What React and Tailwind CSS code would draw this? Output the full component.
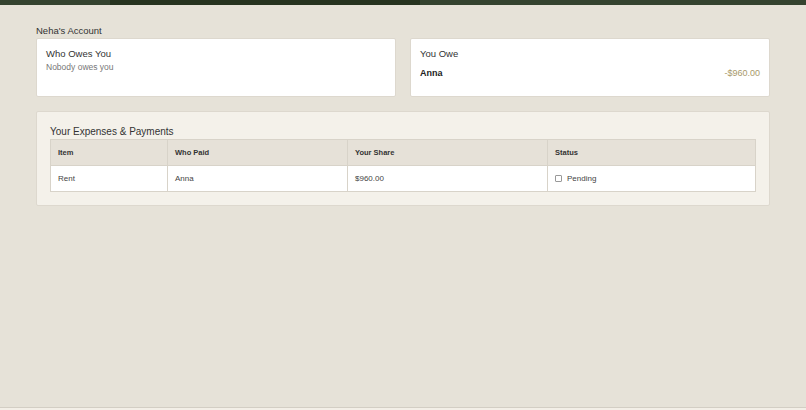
import React from "react";

export default function App() {
  return (
    <div className="w-[806px] h-[410px] flex flex-col bg-[#e6e2d8] text-[#333] overflow-hidden" style={{ fontFamily: '"Liberation Sans", Arial, sans-serif' }}>
      <div className="h-[5px] flex shrink-0 bg-[#35432f]">
        <div className="w-[110px]" />
        <div className="w-[310px] bg-[#27331f]" />
        <div className="flex-1" />
      </div>
      <div className="flex-1 flex flex-col px-[36px] pt-[19px] border-b border-[#d3cec4]">
        <div className="text-[9.5px] leading-[13px] mb-[1px]">Neha's Account</div>
        <div className="flex gap-[14px]">
          <div className="flex-1 h-[59px] bg-white rounded-[2px] border border-[#ddd8ce] px-[9px] pt-[8px]">
            <div className="text-[9.5px] leading-[13px]">Who Owes You</div>
            <div className="text-[8.5px] leading-[12px] mt-[1px] text-[#777]">Nobody owes you</div>
          </div>
          <div className="flex-1 h-[59px] bg-white rounded-[2px] border border-[#ddd8ce] px-[9px] pt-[8px]">
            <div className="text-[9.5px] leading-[13px]">You Owe</div>
            <div className="flex justify-between items-center mt-[7px] text-[9px] leading-[13px]">
              <span className="font-bold text-[#222]">Anna</span>
              <span className="text-[#a8996a]">-$960.00</span>
            </div>
          </div>
        </div>
        <div className="mt-[14px] bg-[#f4f1ea] border border-[#ddd8ce] rounded-[2px] px-[13px] pt-[13px] pb-[13px]">
          <div className="text-[10px] leading-[14px]">Your Expenses &amp; Payments</div>
          <table className="w-full border-collapse border border-[#d8d3c9] text-left">
            <thead>
              <tr className="bg-[#e6e1d8] h-[26px] text-[7.5px] font-bold text-[#333]">
                <th className="w-[117px] px-[7px] border border-[#d8d3c9]">Item</th>
                <th className="w-[180px] px-[7px] border border-[#d8d3c9]">Who Paid</th>
                <th className="w-[200px] px-[7px] border border-[#d8d3c9]">Your Share</th>
                <th className="px-[7px] border border-[#d8d3c9]">Status</th>
              </tr>
            </thead>
            <tbody>
              <tr className="bg-white h-[26px] text-[8px] text-[#444]">
                <td className="px-[7px] border border-[#d8d3c9]">Rent</td>
                <td className="px-[7px] border border-[#d8d3c9]">Anna</td>
                <td className="px-[7px] border border-[#d8d3c9]">$960.00</td>
                <td className="px-[7px] border border-[#d8d3c9]">
                  <span className="flex items-center gap-[5px]">
                    <span className="w-[7px] h-[7px] border border-[#999] rounded-[1px] bg-white" />
                    <span>Pending</span>
                  </span>
                </td>
              </tr>
            </tbody>
          </table>
        </div>
      </div>
      <div className="h-[2px] bg-[#f3efe7] shrink-0" />
    </div>
  );
}
